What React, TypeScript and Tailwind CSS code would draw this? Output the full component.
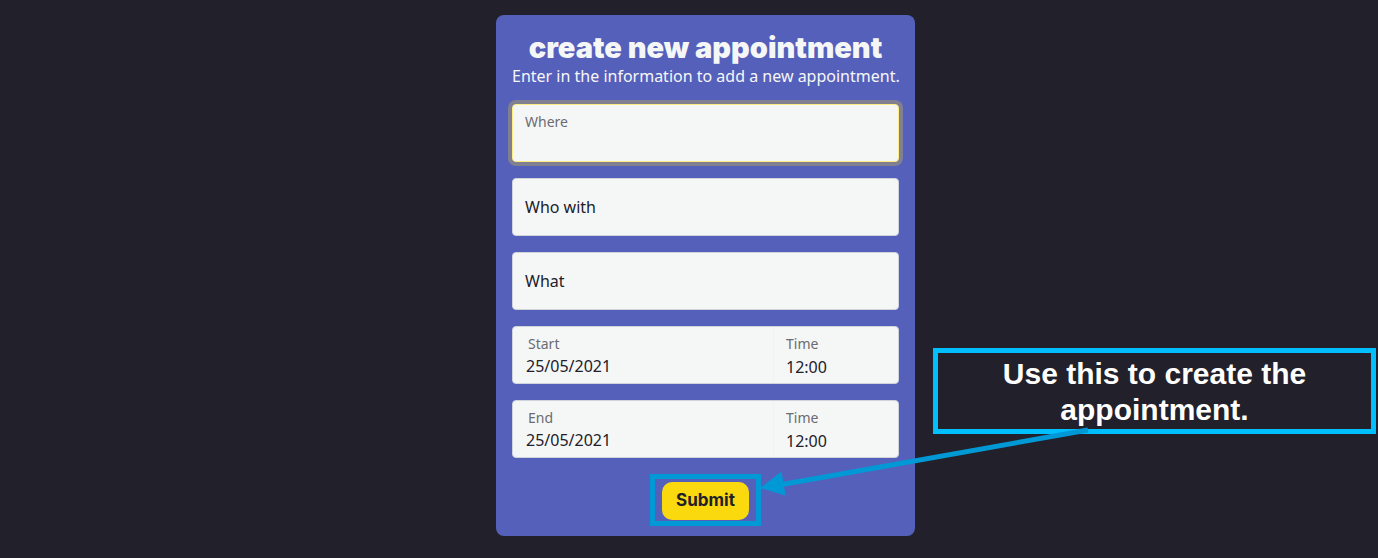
type TextFieldProps = { id: string; label: string; active?: boolean };

function TextField({ id, label, active = false }: TextFieldProps) {
  return (
    <div className="relative">
      <input
        id={id}
        type="text"
        className={
          active
            ? "block h-[58px] w-full rounded border border-[#fdec82] bg-[#f5f7f7] px-3 pt-6 pb-2 text-[#212529] ring-4 ring-[#808090] outline-none"
            : "block h-[58px] w-full rounded border border-[#ced4da] bg-[#f5f7f7] px-3 pt-6 pb-2 text-[#212529] outline-none"
        }
      />
      <label
        htmlFor={id}
        className={
          active
            ? "pointer-events-none absolute top-2 left-[13px] text-sm leading-5 text-[#6b6b71]"
            : "pointer-events-none absolute inset-y-0 left-[13px] flex items-center text-base text-[#22202a]"
        }
      >
        {label}
      </label>
    </div>
  );
}

type DateTimeProps = { id: string; label: string; date: string; time: string };

function DateTimeField({ id, label, date, time }: DateTimeProps) {
  return (
    <div className="flex h-[58px] rounded border border-[#ced4da] bg-[#f5f7f7]">
      <div className="flex min-w-0 flex-1 flex-col border-r border-[#f0f2f3] pt-[7px] pl-[13px]">
        <label htmlFor={id + "-date"} className="pl-0.5 text-sm leading-5 text-[#6b6b71]">
          {label}
        </label>
        <input
          id={id + "-date"}
          type="text"
          defaultValue={date}
          className="w-full bg-transparent leading-6 text-[#22202a] outline-none"
        />
      </div>
      <div className="flex w-[124px] flex-col pt-[7px] pl-3">
        <label htmlFor={id + "-time"} className="text-sm leading-5 text-[#6b6b71]">
          Time
        </label>
        <input
          id={id + "-time"}
          type="text"
          defaultValue={time}
          className="w-full bg-transparent pt-px leading-6 text-[#22202a] outline-none"
        />
      </div>
    </div>
  );
}

export default function App() {
  return (
    <div className="flex min-h-screen items-start justify-center overflow-hidden bg-[#22202a] pt-[15px] pl-[33px] font-['Noto_Sans',sans-serif] text-base">
      <main className="relative w-[419px]">
        <form className="flex flex-col gap-4 rounded-lg bg-[#5560bb] p-4" onSubmit={(e) => e.preventDefault()}>
          <header className="text-center whitespace-nowrap text-[#f5f7f7]">
            <h1 className="font-['Inter',sans-serif] text-[29px] leading-[33px] font-black">create new appointment</h1>
            <p className="leading-6">Enter in the information to add a new appointment.</p>
          </header>
          <TextField id="where" label="Where" active />
          <TextField id="who" label="Who with" />
          <TextField id="what" label="What" />
          <DateTimeField id="start" label="Start" date="25/05/2021" time="12:00" />
          <DateTimeField id="end" label="End" date="25/05/2021" time="12:00" />
          <div className="relative mt-2 self-center">
            <button
              type="submit"
              className="block h-[38px] w-[87px] rounded-[10px] bg-[#fad90f] font-['Inter',sans-serif] text-[17px] font-bold text-[#22202a]"
            >
              Submit
            </button>
            <div className="pointer-events-none absolute -inset-x-3 -top-2 -bottom-1.5 border-5 border-[#0099d6]" />
          </div>
        </form>
        <aside className="absolute top-[333px] left-[437px] w-[443px] border-5 border-[#00bfff] bg-[#22202a] px-12 pt-[3px] pb-px text-center font-['Liberation_Sans',sans-serif] text-[30px] leading-9 font-bold text-white">
          Use this to create the appointment.
        </aside>
        <svg
          className="pointer-events-none absolute top-[405px] left-[264px]"
          width="330"
          height="80"
          viewBox="0 0 330 80"
          aria-hidden="true"
        >
          <path d="M22 64.5 328 10" fill="none" stroke="#0099d6" strokeWidth="5" />
          <path d="M0 68 21.5 51.5 25.5 75.5Z" fill="#0099d6" />
        </svg>
      </main>
    </div>
  );
}
